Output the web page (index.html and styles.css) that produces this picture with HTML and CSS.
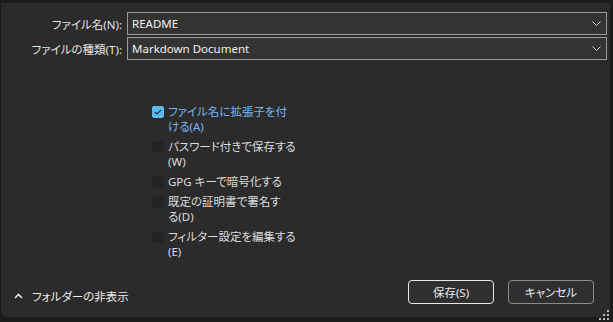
FILE: index.html
```html
<!DOCTYPE html>
<html lang="ja">
<head>
    <meta charset="UTF-8">
    <title>名前を付けて保存</title>
    <link rel="stylesheet" href="styles.css">
</head>
<body>

<div class="window">

    <!-- ファイル名と種類 -->
    <div class="fields">
        <label class="label">ファイル名(N):</label>
        <div class="combo">
            <span>README</span>
            <svg class="chev" width="9" height="5" viewBox="0 0 9 5"><path d="M0.5 0.5 L4.5 4.5 L8.5 0.5" fill="none" stroke="#cfcfcf" stroke-width="1"/></svg>
        </div>
        <label class="label">ファイルの種類(T):</label>
        <div class="combo">
            <span>Markdown Document</span>
            <svg class="chev" width="9" height="5" viewBox="0 0 9 5"><path d="M0.5 0.5 L4.5 4.5 L8.5 0.5" fill="none" stroke="#cfcfcf" stroke-width="1"/></svg>
        </div>
    </div>

    <!-- オプション -->
    <ul class="options">
        <li class="opt checked">
            <span class="box"><svg width="8" height="6" viewBox="0 0 8 6"><path d="M0.8 3 L3 5 L7.2 0.8" fill="none" stroke="#1b2a36" stroke-width="1.2"/></svg></span>
            <span class="text">ファイル名に拡張子を付
ける(A)</span>
        </li>
        <li class="opt">
            <span class="box"></span>
            <span class="text">パスワード付きで保存する
(W)</span>
        </li>
        <li class="opt">
            <span class="box"></span>
            <span class="text">GPG キーで暗号化する</span>
        </li>
        <li class="opt">
            <span class="box"></span>
            <span class="text">既定の証明書で署名す
る(D)</span>
        </li>
        <li class="opt">
            <span class="box"></span>
            <span class="text">フィルター設定を編集する
(E)</span>
        </li>
    </ul>

    <!-- 下部 -->
    <div class="footer">
        <div class="toggle">
            <svg width="9" height="6" viewBox="0 0 9 6"><path d="M1 5 L4.5 1.5 L8 5" fill="none" stroke="#e8e8e8" stroke-width="1.6"/></svg>
            <span>フォルダーの非表示</span>
        </div>
        <div class="buttons">
            <button class="btn default">保存(S)</button>
            <button class="btn">キャンセル</button>
        </div>
    </div>

    <svg class="grip" width="10" height="10" viewBox="0 0 10 10" fill="#bdbdbd">
        <rect x="8" y="0" width="2" height="2"/>
        <rect x="4" y="4" width="2" height="2"/><rect x="8" y="4" width="2" height="2"/>
        <rect x="0" y="8" width="2" height="2"/><rect x="4" y="8" width="2" height="2"/><rect x="8" y="8" width="2" height="2"/>
    </svg>
</div>

</body>
</html>
```

FILE: styles.css
```css
html, body {
    margin: 0;
    height: 100%;
}

body {
    background: #1c1c1f;
    color: #e4e4e4;
    font-family: "Noto Sans", "Noto Sans CJK JP", sans-serif;
    font-size: 11.5px;
    font-feature-settings: "palt";
    overflow: hidden;
}

.window {
    position: relative;
    box-sizing: border-box;
    margin: 3px 3px 0 1px;
    height: 314px;
    background: #2b2b2b;
    border-radius: 0 0 6px 6px;
    display: flex;
    flex-direction: column;
}

/* ファイル名 / 種類 */
.fields {
    display: grid;
    grid-template-columns: 121px 1fr;
    column-gap: 5px;
    row-gap: 2px;
    padding: 9px 3px 0 0;
    align-items: center;
}

.label {
    text-align: right;
    white-space: nowrap;
}

.combo {
    display: flex;
    align-items: center;
    justify-content: space-between;
    box-sizing: border-box;
    height: 23px;
    padding: 0 5px 0 4px;
    background: #333333;
    border: 1px solid #9a9a9a;
    color: #f0f0f0;
}

/* チェックボックス */
.options {
    list-style: none;
    margin: 44px 0 0 0;
    padding: 0 0 0 151px;
}

.opt {
    display: flex;
    align-items: flex-start;
    gap: 4px;
    margin-bottom: 5px;
    line-height: 15px;
}

.box {
    flex: none;
    box-sizing: border-box;
    width: 12px;
    height: 12px;
    margin-top: 2px;
    border-radius: 2px;
    background: #232323;
    border: 1px solid #262626;
    display: flex;
    align-items: center;
    justify-content: center;
}

.checked .box {
    background: #5cbaf3;
    border-color: #5cbaf3;
}

.text {
    white-space: pre-line;
    color: #dcdcdc;
}

.checked .text {
    color: #7ab4ef;
}

/* フッター */
.footer {
    margin-top: auto;
    display: flex;
    justify-content: space-between;
    align-items: flex-start;
    padding: 0 16px 13px 13px;
}

.toggle {
    display: flex;
    align-items: center;
    gap: 9px;
    margin-top: 8px;
    color: #ececec;
}

.buttons {
    display: flex;
    gap: 14px;
}

.btn {
    box-sizing: border-box;
    width: 86px;
    height: 24px;
    padding: 0;
    font: inherit;
    color: #ececec;
    background: #2f2f2f;
    border: 1px solid #8a8a8a;
    border-radius: 4px;
}

.btn.default {
    border-color: #e8e8e8;
}

.grip {
    position: absolute;
    right: 1px;
    bottom: -3px;
}
```
